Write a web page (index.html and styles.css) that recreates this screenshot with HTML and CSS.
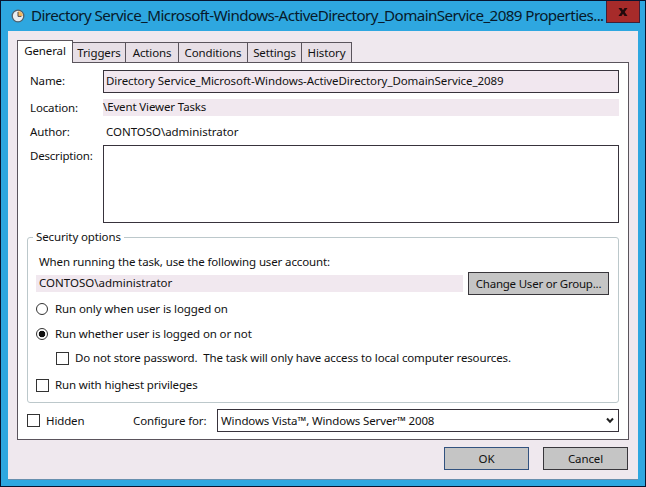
FILE: index.html
```html
<!DOCTYPE html>
<html lang="en">
<head>
<meta charset="utf-8">
<title>Task Properties</title>
<link rel="stylesheet" href="styles.css">
</head>
<body>
<div class="window">
  <header class="titlebar">
    <svg class="clock" width="14" height="14" viewBox="0 0 14 14"><circle cx="7" cy="7" r="5.8" fill="#e9edf0" stroke="#52616c" stroke-width="1.3"/><path d="M7 7V2.2A4.8 4.8 0 0 1 11.8 7Z" fill="#f3b65c"/><path d="M7 3v4.4h3.4" fill="none" stroke="#4b4a50"/></svg>
    <h1 class="title"><span>Directory Service_Microsoft-Windows-ActiveDirectory_DomainService_2089 Properties...</span></h1>
    <button class="close" aria-label="Close"><svg width="10" height="10" viewBox="0 0 10 10"><path d="M0.500 1h3L5 3.200 6.500 1h3L6.700 4.900 9.500 9H6.500L5 6.700 3.500 9H0.500L3.300 4.900Z" fill="#210a0c"/></svg></button>
  </header>
  <main class="body">
    <nav class="tabs">
      <span class="tab active">General</span><span class="tab triggers">Triggers</span><span class="tab actions">Actions</span><span class="tab conditions">Conditions</span><span class="tab settings">Settings</span><span class="tab history">History</span>
    </nav>
    <section class="panel">
      <div class="row name-row"><label class="name">Name:</label><div class="field"><span>Directory Service_Microsoft-Windows-ActiveDirectory_DomainService_2089</span></div></div>
      <div class="row location-row"><label>Location:</label><div class="strip"><span>\Event Viewer Tasks</span></div></div>
      <div class="row author-row"><label>Author:</label><div class="author"><span>CONTOSO\administrator</span></div></div>
      <div class="row description-row"><label>Description:</label><div class="description"></div></div>
      <fieldset class="security">
        <legend>Security options</legend>
        <p class="intro">When running the task, use the following user account:</p>
        <div class="account"><div class="strip"><span>CONTOSO\administrator</span></div><button class="button change">Change User or Group...</button></div>
        <div class="option first"><i class="radio"></i><span>Run only when user is logged on</span></div>
        <div class="option second"><i class="radio on"></i><span>Run whether user is logged on or not</span></div>
        <div class="option nested"><i class="check"></i><span>Do not store password.&nbsp; The task will only have access to local computer resources.</span></div>
        <div class="option"><i class="check"></i><span>Run with highest privileges</span></div>
      </fieldset>
      <div class="bottom">
        <i class="check"></i><span class="hidden-label">Hidden</span><span class="configure">Configure for:</span>
        <div class="select"><span>Windows Vista™, Windows Server™ 2008</span><svg width="8" height="7" viewBox="0 0 8 7"><path d="M1 1.500 4 4.700 7 1.500" fill="none" stroke="#222" stroke-width="2"/></svg></div>
      </div>
    </section>
    <footer class="footer"><button class="button ok">OK</button><button class="button cancel">Cancel</button></footer>
  </main>
</div>
</body>
</html>
```
FILE: styles.css
```css
* { box-sizing: border-box; }
body { margin: 0; font: 11.5px/16px "Noto Sans", "Open Sans", sans-serif; letter-spacing: -.13px; color: #111; white-space: nowrap; }
button { font: inherit; letter-spacing: inherit; color: inherit; padding: 0; }
.window { width: 646px; height: 487px; border: 1px solid #08142f; background: #2ea7e0; padding: 0 7px 7px; overflow: hidden; }
.titlebar { height: 30px; display: flex; align-items: flex-start; }
.clock { margin: 8px 5px 0 3px; flex: none; }
.title { margin: 2px 0 0 1px; width: 575px; font-size: 15.2px; line-height: 24px; font-weight: 400; letter-spacing: -.59px; color: #071a2b; flex: none; }
.close { width: 34px; height: 22px; margin-left: 0; border: 1px solid #402038; border-top: 0; background: #a72b2a; display: grid; place-items: center; flex: none; }
.body { width: 630px; height: 449px; padding: 9px 8px 0 9px; background: #efe8ee; border: solid #688fae; border-width: 0 0 1px; }
.tabs { display: flex; align-items: flex-end; height: 22px; }
.tab { height: 20px; border: 1px solid #5a545c; border-bottom: 0; border-left-width: 0; background: #e7dfe6; text-align: center; line-height: 19px; }
.tab.active { height: 23px; width: 56px; margin-bottom: -1px; border-left-width: 1px; background: #fff; position: relative; line-height: 20px; }
.triggers { width: 53px; }
.actions { width: 53px; }
.conditions { width: 69px; }
.settings { width: 54px; }
.history { width: 50px; }
.panel { width: 612px; height: 378px; border: 1px solid #5a545c; background: #fff; padding: 7px 9px 0; }
.row { display: flex; }
.row label { width: 76px; padding-left: 3px; flex: none; }
.field { width: 516px; height: 23px; border: 1px solid #38333c; background: #f1e7ef; padding: 2px 2px; letter-spacing: -.08px; }
.name-row label { padding-top: 3px; }
.location-row { margin-top: 6px; height: 17px; }
.strip { width: 516px; height: 17px; background: #f1e8ef; }
.location-row label { padding-top: 1px; }
.author-row { margin-top: 8px; height: 16px; }
.author { padding-left: 3px; letter-spacing: -.04px; }
.description-row { margin-top: 5px; }
.row.description-row label { padding-top: 3px; letter-spacing: -.2px; }
.description { width: 516px; height: 78px; border: 1px solid #38333c; }
.security { margin: 6px 0 0; width: 592px; height: 174px; padding: 0 9px; border: 1px solid #bcc8cb; border-radius: 3px; min-width: 0; }
.security legend { padding: 0 3px; margin-left: -4px; height: 16px; }
.intro { margin: 9px 0 0 2px; }
.account { display: flex; align-items: center; height: 23px; margin-top: 2px; justify-content: space-between; width: 573px; margin-left: -1px; }
.account .strip { width: 427px; padding-left: 3px; letter-spacing: 0; }
.button { height: 23px; border: 1px solid #38363b; background: #c5c5c5; line-height: 21px; text-align: center; }
.change { width: 141px; letter-spacing: -.22px; }
.option { display: flex; align-items: center; height: 16px; margin-left: -1px; }
.first { margin-top: 6px; letter-spacing: -.1px; }
.second { margin-top: 9px; }
.nested { margin: 8px 0 11px 19px; }
.radio { width: 12px; height: 12px; border: 1px solid #333; border-radius: 50%; margin-right: 7px; flex: none; }
.on { background: radial-gradient(circle, #111 0 3px, #fff 3.600px); }
.check { width: 13px; height: 13px; border: 1px solid #333; margin-right: 6px; flex: none; }
.bottom { display: flex; align-items: center; height: 23px; margin-top: 6px; }
.hidden-label { width: 87px; }
.configure { width: 84px; }
.select { width: 402px; height: 23px; border: 1px solid #38333c; display: flex; align-items: center; justify-content: space-between; padding: 0 4px 0 3px; }
.footer { display: flex; justify-content: flex-end; gap: 14px; padding: 7px 2px 0; }
.ok, .cancel { width: 85px; }
.ok { border-color: #32527f; }
```
